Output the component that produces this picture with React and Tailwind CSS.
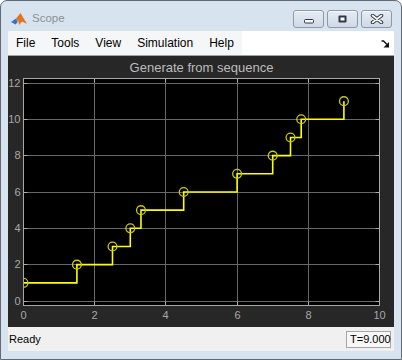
import React from "react";

const X = (x) => 15.5 + 35.6 * x;
const Y = (y) => 245 - 18.17 * y;

const pts = [
  [0, 1], [1.5, 2], [2.5, 3], [3, 4], [3.3, 5], [4.5, 6],
  [6, 7], [7, 8], [7.5, 9], [7.8, 10], [9, 11],
];

function stairPath() {
  let d = `M${X(pts[0][0])} ${Y(pts[0][1])}`;
  for (let i = 1; i < pts.length; i++) {
    d += ` H${X(pts[i][0])} V${Y(pts[i][1])}`;
  }
  return d;
}

const xGrid = [86.5, 157.5, 229.5, 300.5];
const yGrid = [245.5, 208.5, 172.5, 136.5, 99.5, 63.5, 27.5];

function Plot() {
  const font = "'Liberation Sans', Arial, sans-serif";
  return (
    <svg width="386" height="271" viewBox="0 0 386 271" className="block">
      <defs>
        <clipPath id="box">
          <rect x="16" y="23" width="355" height="226" />
        </clipPath>
      </defs>
      <text x="193.5" y="16" textAnchor="middle" fill="#bdbdbd" fontSize="13" fontFamily={font}>
        Generate from sequence
      </text>
      <rect x="15.5" y="22.5" width="356" height="227" fill="#000" />
      {xGrid.map((x) => (
        <line key={"x" + x} x1={x} x2={x} y1="22.5" y2="249.5" stroke="#686868" strokeWidth="1" />
      ))}
      {yGrid.map((y) => (
        <line key={"y" + y} x1="15.5" x2="371.5" y1={y} y2={y} stroke="#686868" strokeWidth="1" />
      ))}
      {yGrid.map((y) => (
        <g key={"t" + y}>
          <line x1="15.5" x2="19.5" y1={y} y2={y} stroke="#a8a8a8" />
          <line x1="367.5" x2="371.5" y1={y} y2={y} stroke="#a8a8a8" />
        </g>
      ))}
      {xGrid.map((x) => (
        <g key={"u" + x}>
          <line x1={x} x2={x} y1="245.5" y2="249.5" stroke="#a8a8a8" />
          <line x1={x} x2={x} y1="22.5" y2="26.5" stroke="#a8a8a8" />
        </g>
      ))}
      <rect x="15.5" y="22.5" width="356" height="227" fill="none" stroke="#a8a8a8" strokeWidth="1" />
      <g clipPath="url(#box)">
        <path d={stairPath()} fill="none" stroke="#ffff00" strokeWidth="1.6" />
        {pts.map(([x, y]) => (
          <circle key={x} cx={X(x)} cy={Y(y)} r="4.4" fill="none" stroke="#cccc00" strokeWidth="1.3" />
        ))}
      </g>
      {[0, 2, 4, 6, 8, 10, 12].map((v, i) => (
        <text key={"yl" + v} x="12.5" y={yGrid[i] + 3.5} textAnchor="end" fill="#a8a8a8" fontSize="11" fontFamily={font}>
          {v}
        </text>
      ))}
      {[0, 2, 4, 6, 8, 10].map((v, i) => (
        <text key={"xl" + v} x={i === 0 ? 15.5 : i === 5 ? 371.5 : xGrid[i - 1]} y="262.5" textAnchor="middle" fill="#a8a8a8" fontSize="11" fontFamily={font}>
          {v}
        </text>
      ))}
    </svg>
  );
}

function MatlabIcon() {
  return (
    <svg width="16" height="15" viewBox="0 0 16 15">
      <polygon points="0,10 5,6.5 7.5,9 4.5,12.5" fill="#3b73b9" />
      <polygon points="5,6.5 7.5,9 4.5,12.5 6.5,11" fill="#7ab0e0" />
      <polygon points="5,6.5 9.5,1 12,6 16,12 11,9.5 8,13 7.5,9" fill="#e8731c" />
      <polygon points="9.5,1 12,6 16,12 13,7" fill="#c2410c" />
    </svg>
  );
}

function WinButton({ children }) {
  return (
    <div className="w-[31px] h-[18px] rounded-[3px] border border-[#8c99ab] bg-gradient-to-b from-[#e6ecf4] to-[#cfd9e6] flex items-center justify-center shadow-[inset_0_1px_0_#f5f8fc]">
      {children}
    </div>
  );
}

export default function App() {
  return (
    <div className="w-[402px] h-[360px] bg-white" style={{ fontFamily: "'Liberation Sans', Arial, sans-serif" }}>
      <div className="w-full h-full flex flex-col rounded-t-[7px] border border-[#626a75] bg-[#d8e3f0] overflow-hidden">
        {/* Title bar */}
        <div className="h-[30px] shrink-0 flex items-center pt-[6px] pl-[10px] pr-[9px]">
          <MatlabIcon />
          <span className="ml-[5px] text-[11.5px] text-[#8a8f96]">Scope</span>
          <div className="ml-auto flex gap-[3px]">
            <WinButton>
              <svg width="12" height="8" viewBox="0 0 12 8" className="mt-[3px]">
                <rect x="1.5" y="2.5" width="9" height="3.5" rx="1" fill="#fff" stroke="#2f3a48" />
              </svg>
            </WinButton>
            <WinButton>
              <svg width="11" height="10" viewBox="0 0 11 10">
                <rect x="1.5" y="1.5" width="8" height="7" rx="1" fill="#2f3a48" />
                <rect x="3.5" y="3.5" width="4" height="3" fill="#fff" />
              </svg>
            </WinButton>
            <WinButton>
              <svg width="14" height="10" viewBox="0 0 14 10">
                <path d="M2.5 1.5 L11.5 8.5 M11.5 1.5 L2.5 8.5" stroke="#2f3a48" strokeWidth="3.6" strokeLinecap="round" />
                <path d="M2.5 1.5 L11.5 8.5 M11.5 1.5 L2.5 8.5" stroke="#fff" strokeWidth="1.6" strokeLinecap="round" />
              </svg>
            </WinButton>
          </div>
        </div>

        {/* Content */}
        <div className="mx-[7px] flex flex-col">
          {/* Menu bar */}
          <div className="h-[25px] bg-white flex items-center border-b border-[#9fa3a8]">
            <div className="h-full flex items-center bg-[#f5f6f7] text-[12px] text-black">
              <span className="px-2">File</span>
              <span className="px-2">Tools</span>
              <span className="px-2">View</span>
              <span className="px-2">Simulation</span>
              <span className="px-2">Help</span>
            </div>
            <div className="ml-auto mr-[4px] mt-[1px]">
              <svg width="9" height="8" viewBox="0 0 9 8">
                <path d="M0.5 1 L2.5 1 L6 4.5" stroke="#111" strokeWidth="1.3" fill="none" />
                <polygon points="8,2 8,7.5 2.5,7.5" fill="#111" />
              </svg>
            </div>
          </div>

          {/* Plot panel */}
          <div className="h-[271px] bg-[#272727]">
            <Plot />
          </div>

          {/* Status bar */}
          <div className="h-[24px] bg-[#f0f0f0] flex items-center pl-[1px] pr-[3px] text-[11px] text-black">
            <span>Ready</span>
            <div className="ml-auto h-[17px] w-[45px] border border-[#a6a6a6] bg-[#f7f7f7] flex items-center pl-[3px]">
              T=9.000
            </div>
          </div>
        </div>
      </div>
    </div>
  );
}
